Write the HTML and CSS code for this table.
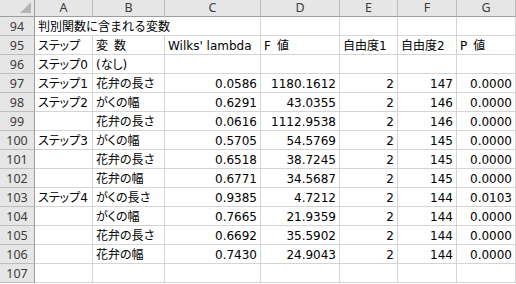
FILE: index.html
```html
<!DOCTYPE html>
<html lang="ja">
<head>
<meta charset="utf-8">
<link rel="stylesheet" href="styles.css">
</head>
<body>
<div class="sheet">
  <div class="corner"></div>
  <div class="ch">A</div><div class="ch">B</div><div class="ch">C</div><div class="ch">D</div><div class="ch">E</div><div class="ch">F</div><div class="ch">G</div>

  <div class="rh">94</div><div class="c span3">判別関数に含まれる変数</div><div class="c"></div><div class="c"></div><div class="c"></div><div class="c"></div>

  <div class="rh">95</div><div class="c">ステップ</div><div class="c">変&ensp;数</div><div class="c">Wilks' lambda</div><div class="c">F&ensp;値</div><div class="c">自由度1</div><div class="c">自由度2</div><div class="c">P&ensp;値</div>

  <div class="rh">96</div><div class="c">ステップ0</div><div class="c">(なし)</div><div class="c"></div><div class="c"></div><div class="c"></div><div class="c"></div><div class="c"></div>

  <div class="rh">97</div><div class="c">ステップ1</div><div class="c">花弁の長さ</div><div class="c n">0.0586</div><div class="c n">1180.1612</div><div class="c n">2</div><div class="c n">147</div><div class="c n">0.0000</div>

  <div class="rh">98</div><div class="c">ステップ2</div><div class="c">がくの幅</div><div class="c n">0.6291</div><div class="c n">43.0355</div><div class="c n">2</div><div class="c n">146</div><div class="c n">0.0000</div>

  <div class="rh">99</div><div class="c"></div><div class="c">花弁の長さ</div><div class="c n">0.0616</div><div class="c n">1112.9538</div><div class="c n">2</div><div class="c n">146</div><div class="c n">0.0000</div>

  <div class="rh">100</div><div class="c">ステップ3</div><div class="c">がくの幅</div><div class="c n">0.5705</div><div class="c n">54.5769</div><div class="c n">2</div><div class="c n">145</div><div class="c n">0.0000</div>

  <div class="rh">101</div><div class="c"></div><div class="c">花弁の長さ</div><div class="c n">0.6518</div><div class="c n">38.7245</div><div class="c n">2</div><div class="c n">145</div><div class="c n">0.0000</div>

  <div class="rh">102</div><div class="c"></div><div class="c">花弁の幅</div><div class="c n">0.6771</div><div class="c n">34.5687</div><div class="c n">2</div><div class="c n">145</div><div class="c n">0.0000</div>

  <div class="rh">103</div><div class="c">ステップ4</div><div class="c">がくの長さ</div><div class="c n">0.9385</div><div class="c n">4.7212</div><div class="c n">2</div><div class="c n">144</div><div class="c n">0.0103</div>

  <div class="rh">104</div><div class="c"></div><div class="c">がくの幅</div><div class="c n">0.7665</div><div class="c n">21.9359</div><div class="c n">2</div><div class="c n">144</div><div class="c n">0.0000</div>

  <div class="rh">105</div><div class="c"></div><div class="c">花弁の長さ</div><div class="c n">0.6692</div><div class="c n">35.5902</div><div class="c n">2</div><div class="c n">144</div><div class="c n">0.0000</div>

  <div class="rh">106</div><div class="c"></div><div class="c">花弁の幅</div><div class="c n">0.7430</div><div class="c n">24.9043</div><div class="c n">2</div><div class="c n">144</div><div class="c n">0.0000</div>

  <div class="rh">107</div><div class="c"></div><div class="c"></div><div class="c"></div><div class="c"></div><div class="c"></div><div class="c"></div><div class="c"></div>
</div>
</body>
</html>
```

FILE: styles.css
```css
html, body {
  margin: 0;
  padding: 0;
  background: #ffffff;
  overflow: hidden;
}

.sheet {
  display: grid;
  grid-template-columns: 35px 58px 72px 96px 79px 58px 59px 59px;
  grid-template-rows: 17px repeat(14, 19px);
  width: 516px;
}

.sheet > div {
  box-sizing: border-box;
  white-space: nowrap;
}

.corner {
  position: relative;
  background: #e6e6e6;
  border-right: 1px solid #9e9e9e;
  border-bottom: 1px solid #9e9e9e;
}

.corner::after {
  content: "";
  position: absolute;
  right: 3px;
  bottom: 3px;
  width: 11px;
  height: 11px;
  background: #b5b5b5;
  clip-path: polygon(100% 0, 100% 100%, 0 100%);
}

.ch {
  background: #e6e6e6;
  border-right: 1px solid #bdbdbd;
  border-bottom: 1px solid #9e9e9e;
  color: #3c3c3c;
  font-family: "Noto Sans", "Open Sans", sans-serif;
  font-size: 12.5px;
  line-height: 16px;
  text-align: center;
}

.rh {
  background: #e6e6e6;
  border-right: 1px solid #9e9e9e;
  border-bottom: 1px solid #bdbdbd;
  color: #3c3c3c;
  font-family: "Noto Sans", "Open Sans", sans-serif;
  font-size: 12.5px;
  line-height: 19px;
  text-align: center;
}

.c {
  border-right: 1px solid #d4d4d4;
  border-bottom: 1px solid #d4d4d4;
  color: #000000;
  font-family: "DejaVu Sans", "Noto Sans CJK JP", sans-serif;
  font-size: 12px;
  font-feature-settings: "palt";
  line-height: 16px;
  padding: 2px 3px 0 3px;
  overflow: hidden;
}

.span3 {
  grid-column: span 3;
  overflow: visible;
  font-feature-settings: normal;
}

.n {
  text-align: right;
}
```
